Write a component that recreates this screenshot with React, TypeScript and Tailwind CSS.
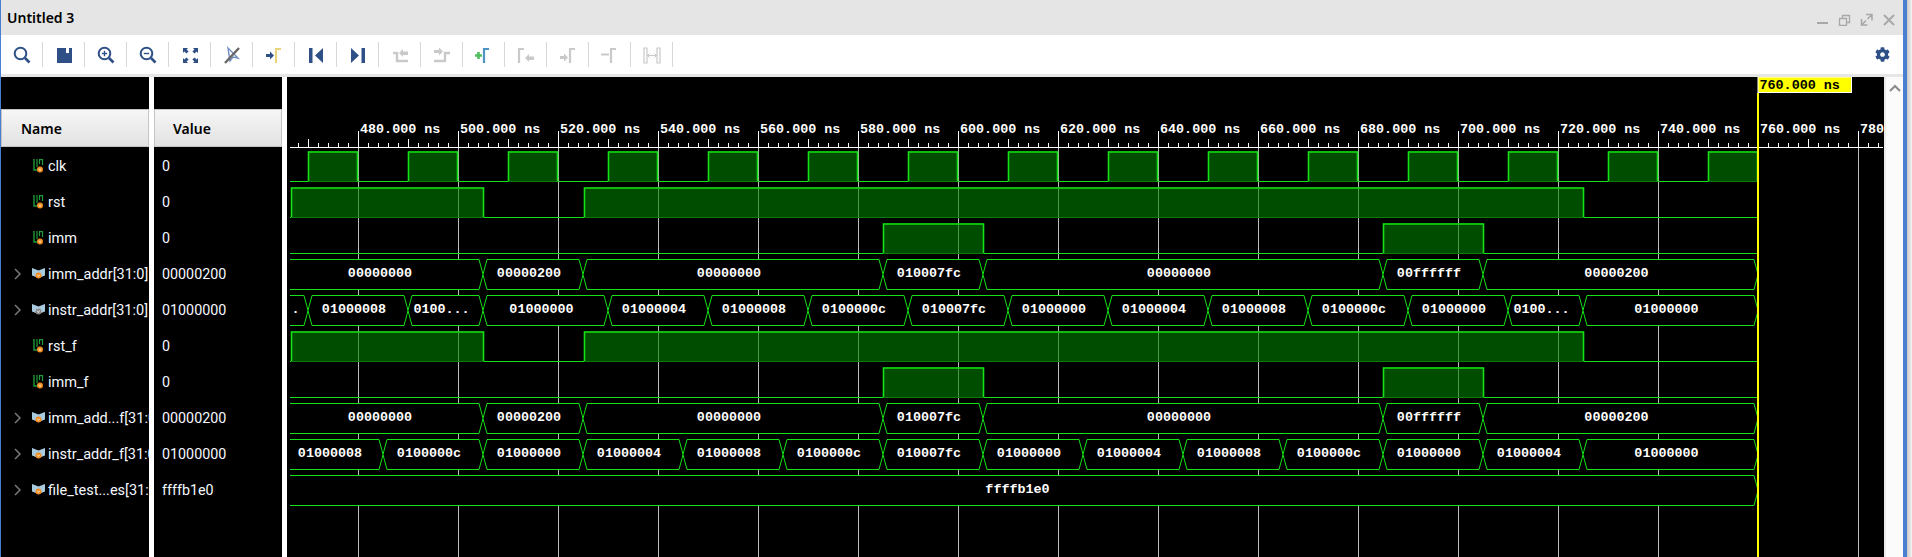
import { FaCog } from "react-icons/fa";

const BLUE = "#2f4f87";
const GRAY = "#c9c9c9";
const LINE = "#16e016";

const X0 = 290;
const END = 1758;

function Ico({ children }: { children: React.ReactNode }) {
  return (
    <svg width="20" height="20" viewBox="0 0 20 20" className="block">
      {children}
    </svg>
  );
}

function Lens({ mark }: { mark?: "plus" | "minus" }) {
  return (
    <Ico>
      <circle cx="8.5" cy="8.5" r="5.8" fill="none" stroke={BLUE} strokeWidth="2" />
      <path d="M13 13l4.5 4.5" stroke={BLUE} strokeWidth="2.6" />
      {mark && <path d="M5.8 8.5h5.4" stroke={BLUE} strokeWidth="1.4" />}
      {mark === "plus" && <path d="M8.5 5.8v5.4" stroke={BLUE} strokeWidth="1.4" />}
    </Ico>
  );
}

function Edge({ x, color }: { x: number; color: string }) {
  return <path d={`M${x + 1} 18V4h5`} fill="none" stroke={color} strokeWidth="2.2" />;
}

const tools: React.ReactNode[] = [
  <Lens />,
  <Ico>
    <path d="M3 3h15v15H3z" fill={BLUE} />
    <path d="M12 3h3v5h-3z" fill="#fff" />
  </Ico>,
  <Lens mark="plus" />,
  <Lens mark="minus" />,
  <Ico>
    <path
      d="M3 3h5L6.6 4.4 8.6 6.4 6.4 8.6 4.4 6.6 3 8zM18 3v5l-1.4-1.4-2 2-2.2-2.2 2-2L13 3zM3 18v-5l1.4 1.4 2-2 2.2 2.2-2 2L8 18zM18 18h-5l1.4-1.4-2-2 2.2-2.2 2 2L18 13z"
      fill={BLUE}
    />
  </Ico>,
  <Ico>
    <path d="M6 3l2 13 3-4 5 1z" fill="none" stroke="#6f8fc0" strokeWidth="1.4" />
    <path d="M3 18L17 3" stroke="#666" strokeWidth="2.4" />
  </Ico>,
  <Ico>
    <path d="M2 9h4V6.5l4 4-4 4V12H2z" fill={BLUE} />
    <Edge x={11} color="#e8d47c" />
  </Ico>,
  <Ico>
    <path d="M3 3h3.5v15H3zM17 3v15l-8-7.5z" fill={BLUE} />
  </Ico>,
  <Ico>
    <path d="M3 3v15l8-7.5zM13.5 3H17v15h-3.5z" fill={BLUE} />
  </Ico>,
  <Ico>
    <path d="M3 8h4v8h11" fill="none" stroke={GRAY} strokeWidth="2.4" />
    <path d="M9 8l4-4v2.5h5v3.5h-5v2z" fill={GRAY} />
  </Ico>,
  <Ico>
    <path d="M2 16h11V8h5" fill="none" stroke={GRAY} strokeWidth="2.4" />
    <path d="M2 5h5V2.5l4 4-4 4V8H2z" fill={GRAY} />
  </Ico>,
  <Ico>
    <path d="M1 10.5h7M4.5 7v7" stroke="#4fbf5f" strokeWidth="2.6" />
    <Edge x={9} color="#4d93c4" />
  </Ico>,
  <Ico>
    <Edge x={2} color={GRAY} />
    <path d="M9 13l4-4v2.5h5v3.5h-5V17z" fill={GRAY} />
  </Ico>,
  <Ico>
    <path d="M2 11h4V8.5l4 4-4 4V14H2z" fill={GRAY} />
    <Edge x={11} color={GRAY} />
  </Ico>,
  <Ico>
    <path d="M1 9.5h8" stroke={GRAY} strokeWidth="2" />
    <Edge x={10} color={GRAY} />
  </Ico>,
  <Ico>
    <path d="M2 3h3v15H2zM15 3h3v15h-3z" fill="none" stroke={GRAY} strokeWidth="1.2" />
    <path d="M5 10.5h10M7.5 8.5l-2 2 2 2M12.5 8.5l2 2-2 2" fill="none" stroke={GRAY} strokeWidth="1" />
  </Ico>,
];

function Toolbar() {
  return (
    <div className="flex h-[39px] items-center justify-between bg-white">
      <div className="flex">
        {tools.map((icon, i) => (
          <div key={i} className="flex h-[25px] w-[42px] items-center justify-center border-r border-[#d8d8d8]">
            {icon}
          </div>
        ))}
      </div>
      <FaCog size={15} color={BLUE} className="mr-[13px]" />
    </div>
  );
}

function WindowButtons() {
  return (
    <svg width="80" height="17" viewBox="0 0 80 17" className="mr-[8px] block" fill="none" stroke="#a8a8a8">
      <path d="M2 14h11" strokeWidth="2" />
      <path d="M24.5 9.5h7v7h-7zM27.5 9.5v-3h7v7h-3" strokeWidth="1.3" />
      <path d="M46.5 10v6h6M47 15.5l4-4M51 5.5h6v6M56.5 6l-4 4" strokeWidth="1.5" />
      <path d="M69 6l10 10M79 6l-10 10" strokeWidth="2" />
    </svg>
  );
}

function BitIcon() {
  return (
    <svg width="11" height="14" viewBox="0 0 11 14" className="block">
      <path d="M1 0v11h4" fill="none" stroke="#1f9a3a" strokeWidth="1.4" />
      <path d="M4 0v8M6.5 5V.7h3V6" fill="none" stroke="#1f9a3a" strokeWidth="1.2" />
      <circle cx="7" cy="10.5" r="3" fill="#f08c1e" />
      <path d="M5.9 9.6l1.1 2 1.1-2" fill="none" stroke="#fff" strokeWidth=".7" />
    </svg>
  );
}

function BusIcon({ gray }: { gray?: boolean }) {
  return (
    <svg width="13" height="12" viewBox="0 0 13 12" className="block">
      <path d="M0 0l6.5 2.5L13 0v7.5L6.5 10 0 7.5z" fill="#a9cbe0" />
      <circle cx="6.5" cy="7.5" r="3" fill={gray ? "#8a8a8a" : "#f08c1e"} />
      <path d="M5.4 6.6l1.1 2 1.1-2" fill="none" stroke="#fff" strokeWidth=".7" />
    </svg>
  );
}

type Signal = { name: string; value: string; bus?: boolean; gray?: boolean };

const signals: Signal[] = [
  { name: "clk", value: "0" },
  { name: "rst", value: "0" },
  { name: "imm", value: "0" },
  { name: "imm_addr[31:0]", value: "00000200", bus: true },
  { name: "instr_addr[31:0]", value: "01000000", bus: true, gray: true },
  { name: "rst_f", value: "0" },
  { name: "imm_f", value: "0" },
  { name: "imm_add...f[31:0]", value: "00000200", bus: true },
  { name: "instr_addr_f[31:0]", value: "01000000", bus: true },
  { name: "file_test...es[31:0]", value: "ffffb1e0", bus: true },
];

function Header({ label, className }: { label: string; className: string }) {
  return (
    <div
      className={`mb-[1px] mt-[32px] flex h-[38px] items-center border border-[#c4c4c4] bg-gradient-to-b from-[#f6f6f6] to-[#e2e2e2] font-semibold text-[14px] text-black ${className}`}
    >
      {label}
    </div>
  );
}

const rowFont = { fontFamily: 'Roboto, "Noto Sans", sans-serif' };

function NameColumn() {
  return (
    <div className="w-[148px] shrink-0 bg-black">
      <Header label="Name" className="pl-[19px]" />
      {signals.map((s) => (
        <div
          key={s.name}
          className="flex h-[36px] items-center overflow-hidden whitespace-nowrap text-[14.5px] text-[#f4f8ff]"
          style={rowFont}
        >
          <div className="flex w-[29px] shrink-0 justify-end pr-[8px]">
            {s.bus && (
              <svg width="8" height="12" viewBox="0 0 8 12" fill="none" stroke="#777" strokeWidth="1.5">
                <path d="M1 1l5 5-5 5" />
              </svg>
            )}
          </div>
          <div className="flex w-[18px] shrink-0 justify-center pr-[1px]">
            {s.bus ? <BusIcon gray={s.gray} /> : <BitIcon />}
          </div>
          <span className="pt-[1px]">{s.name}</span>
        </div>
      ))}
    </div>
  );
}

function ValueColumn() {
  return (
    <div className="w-[128px] shrink-0 bg-black">
      <Header label="Value" className="pl-[18px]" />
      {signals.map((s) => (
        <div key={s.name} className="flex h-[36px] items-center pl-[8px] pt-[1px] text-[14.3px] text-[#f4f8ff]" style={rowFont}>
          {s.value}
        </div>
      ))}
    </div>
  );
}

// time axis: 5px per ns, 480 ns sits at x = 358
const majors = Array.from({ length: 16 }, (_, i) => 358 + i * 100);
const minors = Array.from({ length: 160 }, (_, i) => 298 + i * 10).filter((x) => x < 1884);

const monoProps = {
  fontFamily: '"Liberation Mono", monospace',
  fontSize: 13.4,
  fontWeight: 700,
};

function BitWave({ row, highs }: { row: number; highs: [number, number][] }) {
  const top = 151 + row * 36;
  const bottom = top + 30;
  return (
    <g>
      <path d={`M${X0} ${bottom + 0.5}H${END}`} stroke={LINE} />
      {highs.map(([a, b]) => (
        <g key={a}>
          <rect x={a} y={top} width={b - a} height={30} fill="#008000" fillOpacity="0.6" />
          <path d={`M${a} ${bottom + 0.5}H${b}`} stroke="#0c7a0c" />
          <path d={`M${a + 0.5} ${bottom}V${top + 1}H${b - 0.5}V${bottom}`} fill="none" stroke={LINE} strokeWidth="1.6" />
        </g>
      ))}
    </g>
  );
}

function BusWave({ row, start, edges, labels }: { row: number; start: number; edges: number[]; labels: string[] }) {
  const t = 151 + row * 36 + 0.5;
  const b = t + 30;
  const all = [start, ...edges, END];
  return (
    <g>
      {labels.map((label, i) => {
        const left = all[i];
        const right = all[i + 1];
        const first = i === 0;
        const pts = [
          first ? `${X0},${t}` : `${left + 4},${t}`,
          `${right - 4},${t}`,
          `${right - 1},${t + 11}`,
          `${right},${t + 15}`,
          `${right - 1},${t + 19}`,
          `${right - 4},${b}`,
          first ? `${X0},${b}` : `${left + 4},${b}`,
        ];
        if (!first) pts.push(`${left + 1},${t + 19}`, `${left},${t + 15}`, `${left + 1},${t + 11}`);
        return (
          <g key={i}>
            <polyline points={first ? pts.join(" ") : pts.concat(pts[0]).join(" ")} fill="#000" stroke={LINE} />
            <text x={(left + right) / 2 - 4} y={t + 17} textAnchor="middle" fill="#fff" {...monoProps}>
              {label}
            </text>
          </g>
        );
      })}
    </g>
  );
}

const clkHighs: [number, number][] = Array.from({ length: 15 }, (_, i) => [308 + i * 100, 358 + i * 100]);
const rstHighs: [number, number][] = [[291, 484], [584, 1584]];
const immHighs: [number, number][] = [[883, 984], [1383, 1484]];

const immEdges = [483, 583, 883, 983, 1383, 1483];
const immLabels = ["00000000", "00000200", "00000000", "010007fc", "00000000", "00ffffff", "00000200"];

function Waveform() {
  return (
    <svg width="1597" height="480" viewBox="287 77 1597 480" className="block shrink-0 bg-black">
      {majors.map((x) => (
        <path key={x} d={`M${x + 0.5} 147V557`} stroke="#bcbcbc" />
      ))}
      <path d={`M${X0} 147.5H1883`} stroke="#fff" />
      {minors.map((x) => (
        <path key={x} d={`M${x + 0.5} ${(x - 308) % 100 === 0 ? 139 : 143}V147`} stroke="#fff" />
      ))}
      {majors.map((x, i) => (
        <g key={x}>
          <path d={`M${x + 0.5} 131V147`} stroke="#fff" />
          <text x={x + 2} y={133} fill="#fff" {...monoProps}>
            {`${480 + i * 20}.000 ns`}
          </text>
        </g>
      ))}

      <BitWave row={0} highs={clkHighs} />
      <BitWave row={1} highs={rstHighs} />
      <BitWave row={2} highs={immHighs} />
      <BusWave row={3} start={285} edges={immEdges} labels={immLabels} />
      <BusWave
        row={4}
        start={291}
        edges={[308, 408, 483, 608, 708, 808, 908, 1008, 1108, 1208, 1308, 1408, 1508, 1583]}
        labels={[".", "01000008", "0100...", "01000000", "01000004", "01000008", "0100000c", "010007fc", "01000000", "01000004", "01000008", "0100000c", "01000000", "0100...", "01000000"]}
      />
      <BitWave row={5} highs={rstHighs} />
      <BitWave row={6} highs={immHighs} />
      <BusWave row={7} start={285} edges={immEdges} labels={immLabels} />
      <BusWave
        row={8}
        start={285}
        edges={[383, 483, 583, 683, 783, 883, 983, 1083, 1183, 1283, 1383, 1483, 1583]}
        labels={["01000008", "0100000c", "01000000", "01000004", "01000008", "0100000c", "010007fc", "01000000", "01000004", "01000008", "0100000c", "01000000", "01000004", "01000000"]}
      />
      <BusWave row={9} start={285} edges={[]} labels={["ffffb1e0"]} />

      <rect x="1759" y="77" width="125" height="16" fill="#000" />
      <rect x="1758" y="77" width="93.5" height="15.5" fill="#ffff00" stroke="#fff" />
      <text x="1759.5" y="89" fill="#000" {...monoProps}>
        760.000 ns
      </text>
      <path d="M1758 93V557" stroke="#ffff00" strokeWidth="2" />
    </svg>
  );
}

export default function App() {
  return (
    <div className="flex h-[557px] w-[1912px] overflow-hidden bg-white" style={{ fontFamily: '"Noto Sans", sans-serif' }}>
      <div className="flex w-[1903px] shrink-0 flex-col border-l border-[#4a7fd0]">
        <div className="flex h-[35px] items-center justify-between bg-[#e5e5e5]">
          <span className="pl-[6px] text-[14px] font-semibold text-black">Untitled 3</span>
          <WindowButtons />
        </div>
        <Toolbar />
        <div className="h-[3px] bg-[#e6e6e6]" />
        <div className="flex min-h-0 flex-1 bg-white">
          <NameColumn />
          <div className="w-[5px] shrink-0" />
          <ValueColumn />
          <div className="w-[5px] shrink-0" />
          <Waveform />
          <div className="flex flex-1 justify-center border-l-2 border-[#ececec] bg-[#fbfbfb] pt-[7px]">
            <svg width="12" height="8" viewBox="0 0 12 8" fill="none" stroke="#8c8c8c" strokeWidth="2.2" className="block">
              <path d="M1 7l5-5 5 5" />
            </svg>
          </div>
        </div>
      </div>
      <div className="w-[4px] shrink-0 bg-[#4a7fd0]" />
      <div className="w-[5px] shrink-0 bg-gradient-to-r from-[#c8c8c8] to-[#f4f4f4]" />
    </div>
  );
}
